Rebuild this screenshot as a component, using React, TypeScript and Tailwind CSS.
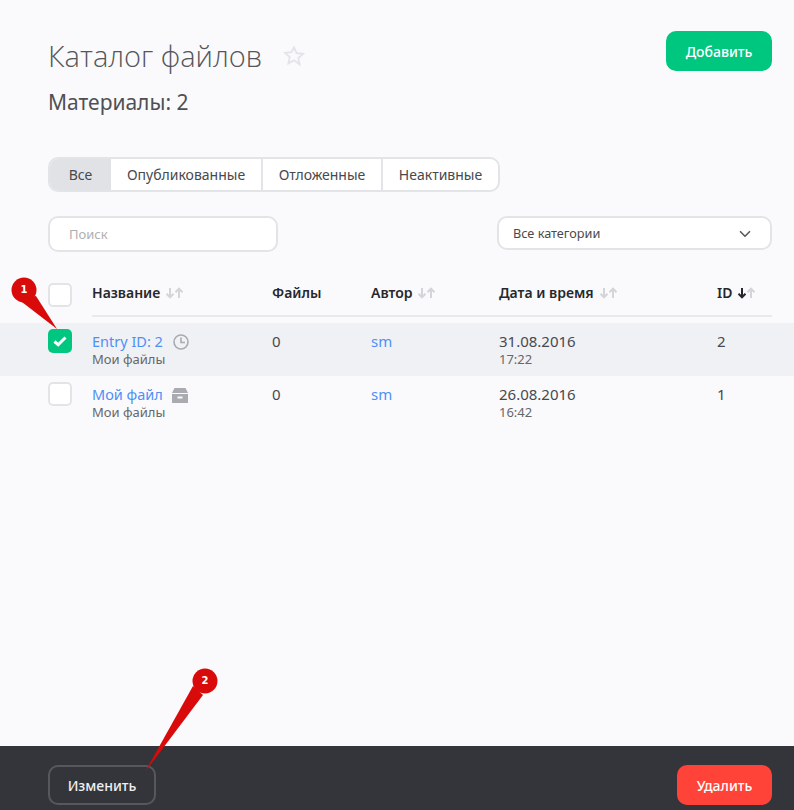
import { ChevronDown } from 'lucide-react';

const sans = "font-['Noto_Sans','Open_Sans',sans-serif]";

type Row = {
  title: string;
  icon: 'clock' | 'archive';
  date: string;
  time: string;
  id: number;
  checked?: boolean;
};

const rows: Row[] = [
  { title: 'Entry ID: 2', icon: 'clock', date: '31.08.2016', time: '17:22', id: 2, checked: true },
  { title: 'Мой файл', icon: 'archive', date: '26.08.2016', time: '16:42', id: 1 },
];

function SortArrows({ active }: { active?: boolean }) {
  return (
    <svg width="19" height="12" viewBox="0 0 19 12" fill="none" strokeWidth="2" className="ml-[5px] shrink-0">
      <path d="M5 1v9M1.500 6.800 5 10.300l3.500-3.500" stroke={active ? '#26282c' : '#d3d5d9'} />
      <path d="M14 11V2M10.500 5.200 14 1.700l3.500 3.500" stroke="#d3d5d9" />
    </svg>
  );
}

function Checkbox({ checked }: { checked?: boolean }) {
  if (checked) {
    return (
      <div className="flex h-6 w-6 items-center justify-center rounded-[5px] bg-[#00c77f]">
        <svg width="14" height="12" viewBox="0 0 14 12" fill="none" stroke="#fff" strokeWidth="3">
          <path d="M1.500 6.500 5.200 9.700 12.500 2.500" />
        </svg>
      </div>
    );
  }
  return <div className="h-6 w-6 rounded-[5px] border-2 border-[#e3e4e8] bg-white" />;
}

function ClockIcon() {
  return (
    <svg width="16" height="16" viewBox="0 0 16 16" fill="none" stroke="#a9abb0" strokeWidth="1.600" className="mt-[3px] ml-[10px]">
      <circle cx="8" cy="8" r="7" />
      <path d="M8 3.500V8.500H12" />
    </svg>
  );
}

function ArchiveIcon() {
  return (
    <svg width="16" height="15" viewBox="0 0 16 15" className="mt-[4px] ml-[9px]">
      <path d="M2.500 0h11L16 5H0z" fill="#a9abb0" />
      <path fillRule="evenodd" d="M0 6h16v9H0zM5.500 8.500v2h5v-2z" fill="#a9abb0" />
    </svg>
  );
}

function HeaderCell({ label, width, active }: { label: string; width: string; active?: boolean }) {
  return (
    <div className={`flex items-center ${width}`}>
      <span>{label}</span>
      {label !== 'Файлы' && <SortArrows active={active} />}
    </div>
  );
}

export default function App() {
  return (
    <div className={`relative flex h-[810px] w-[794px] flex-col overflow-hidden bg-[#fafafd] text-[#48494d] ${sans}`}>
      <main className="flex-1 pt-[31px]">
        <div className="flex items-start justify-between pr-[22px] pl-12">
          <div>
            <div className="flex items-center">
              <h1 className="font-['Open_Sans',sans-serif] text-[29px] leading-[50px] font-light text-[#55565a]">Каталог файлов</h1>
              <svg width="22" height="22" viewBox="0 0 24 24" fill="none" stroke="#e3e4e9" strokeWidth="2" className="ml-[21px]">
                <path d="m12 2.500 2.900 6.300 6.900.8-5.100 4.700 1.400 6.800L12 16.700l-6.100 3.400 1.400-6.800-5.100-4.700 6.900-.8z" />
              </svg>
            </div>
            <p className="mt-[7px] text-[21px] leading-7 text-[#4f5054]">Материалы: 2</p>
          </div>
          <button className="h-10 w-[106px] rounded-[10px] bg-[#00c77f] text-[14px] font-medium text-white">Добавить</button>
        </div>

        <div className="mt-[41px] ml-12 flex h-[35px] w-[452px] overflow-hidden rounded-[10px] border-2 border-[#e3e4e8] bg-white text-[14px] leading-[31px]">
          <div className="w-[61px] bg-[#e0e2e6] text-center">Все</div>
          <div className="w-[152px] border-r-2 border-[#e3e4e8] text-center">Опубликованные</div>
          <div className="w-[120px] border-r-2 border-[#e3e4e8] text-center">Отложенные</div>
          <div className="flex-1 text-center">Неактивные</div>
        </div>

        <div className="mt-[24px] flex items-start justify-between pr-[22px] pl-12">
          <input
            placeholder="Поиск"
            className="h-9 w-[230px] rounded-[10px] border-2 border-[#e3e4e8] bg-white pl-[19px] text-[13px] outline-none placeholder:text-[#aeafb3]"
          />
          <div className="flex h-[34px] w-[275px] items-center justify-between rounded-[10px] border-2 border-[#e3e4e8] bg-white pt-[1px] pr-[16px] pl-[14px] text-[12.700px]">
            <span>Все категории</span>
            <ChevronDown size={18} strokeWidth={2.200} className="text-[#5a5b60]" />
          </div>
        </div>

        <div className="mt-[31px] flex items-start pl-12">
          <div className="w-11">
            <Checkbox />
          </div>
          <div className="flex h-[32px] flex-1 items-start text-[14px] leading-5 font-semibold text-[#26282c]">
            <HeaderCell label="Название" width="w-[180px]" />
            <HeaderCell label="Файлы" width="w-[99px]" />
            <HeaderCell label="Автор" width="w-[128px]" />
            <HeaderCell label="Дата и время" width="w-[218px]" />
            <HeaderCell label="ID" width="flex-1" active />
          </div>
        </div>
        <div className="ml-[92px] h-[2px] w-[680px] bg-[#e8e9ec]" />
        <div className="h-[6px]" />

        {rows.map((row) => (
          <div key={row.id} className={`flex h-[53px] pl-12 pt-[6px] ${row.checked ? 'bg-[#f0f1f4]' : ''}`}>
            <div className="w-11">
              <Checkbox checked={row.checked} />
            </div>
            <div className="mt-[2px] w-[180px]">
              <div className="flex items-start text-[14.500px] leading-5 text-[#4e8ff7]">
                <span>{row.title}</span>
                {row.icon === 'clock' ? <ClockIcon /> : <ArchiveIcon />}
              </div>
              <div className="text-[13px] leading-[17px] text-[#66676b]">Мои файлы</div>
            </div>
            <div className="mt-[2px] w-[99px] text-[15px] leading-5">0</div>
            <div className="mt-[2px] w-[128px] text-[15px] leading-5 text-[#4e8ff7]">sm</div>
            <div className="mt-[2px] w-[218px]">
              <div className="text-[15px] leading-5">{row.date}</div>
              <div className="text-[13px] leading-[17px] text-[#66676b]">{row.time}</div>
            </div>
            <div className="mt-[2px] text-[15px] leading-5">{row.id}</div>
          </div>
        ))}
      </main>

      <footer className="flex h-[64px] items-center justify-between bg-[#34353a] pt-[14px] pr-[22px] pl-12">
        <button className="h-10 w-[108px] rounded-[10px] border-2 border-[#57585d] text-[14px] font-medium text-[#f0f0f2]">Изменить</button>
        <button className="h-10 w-[95px] rounded-[10px] bg-[#ff4338] text-[14px] font-medium text-white">Удалить</button>
      </footer>

      {/* annotation markers drawn over the page */}
      <svg width="794" height="810" viewBox="0 0 794 810" className="pointer-events-none absolute inset-0">
        <path d="M18 299 36 296 57 329z" fill="#d80a0a" />
        <circle cx="24" cy="290" r="12.500" fill="#d80a0a" />
        <path d="M193 686 203 695 145 772z" fill="#d80a0a" />
        <circle cx="205" cy="681" r="12.500" fill="#d80a0a" />
      </svg>
      <span className="absolute top-[283px] left-[14px] w-5 text-center font-['DejaVu_Sans',sans-serif] text-[10px] leading-[14px] font-bold text-white">1</span>
      <span className="absolute top-[674px] left-[195px] w-5 text-center font-['DejaVu_Sans',sans-serif] text-[10px] leading-[14px] font-bold text-white">2</span>
    </div>
  );
}
